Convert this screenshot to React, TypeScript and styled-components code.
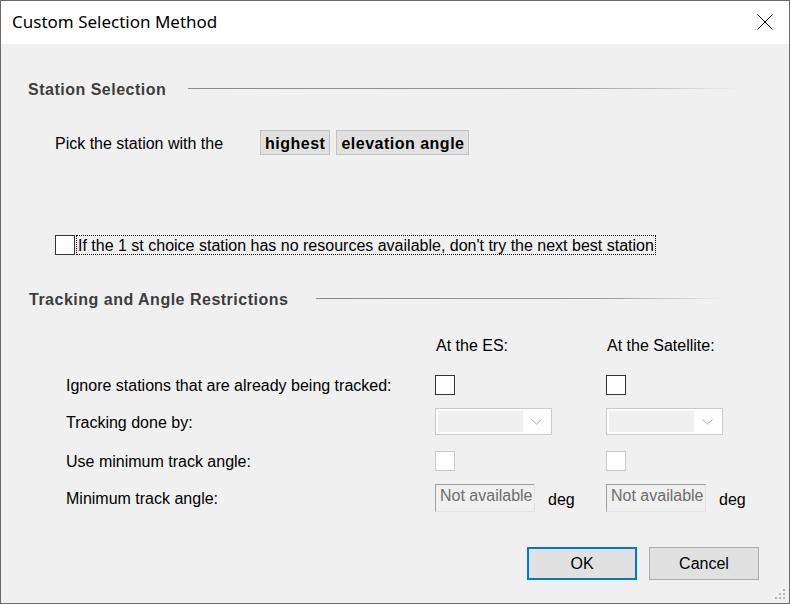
import React from "react";
import styled, { createGlobalStyle } from "styled-components";

const GlobalStyle = createGlobalStyle`
  html, body {
    margin: 0;
    padding: 0;
    background: #f0f0f0;
  }
  * {
    box-sizing: border-box;
  }
`;

const UI_FONT = `"Liberation Sans", Arial, sans-serif`;

const Window = styled.div`
  position: relative;
  width: 790px;
  height: 604px;
  border: 1px solid #6a6a6a;
  background: #f0f0f0;
  display: flex;
  flex-direction: column;
  font-family: ${UI_FONT};
  font-size: 16px;
  color: #000;
`;

const TitleBar = styled.div`
  height: 43px;
  flex-shrink: 0;
  background: #fff;
  display: flex;
  align-items: center;
  justify-content: space-between;
  padding: 0 16px 0 11px;
`;

const TitleText = styled.span`
  font-family: "Noto Sans", "Open Sans", sans-serif;
  font-size: 17px;
  color: #000;
  margin-top: -2px;
`;

const CloseButton = styled.button`
  width: 16px;
  height: 16px;
  padding: 0;
  border: none;
  background: transparent;
  display: flex;
  margin-top: -1px;
`;

const Body = styled.div`
  flex: 1;
  display: flex;
  flex-direction: column;
`;

const SectionHeader = styled.div<{ $top: number; $left: number; $right: number }>`
  display: flex;
  align-items: center;
  height: 20px;
  margin-top: ${(p) => p.$top}px;
  padding-left: ${(p) => p.$left}px;
  padding-right: ${(p) => p.$right}px;
`;

const SectionTitle = styled.span`
  font-weight: bold;
  letter-spacing: 0.5px;
  color: #3d3d3d;
  white-space: nowrap;
  padding-top: 4px;
`;

const SectionLine = styled.div<{ $gap: number }>`
  flex: 1;
  height: 1px;
  margin-left: ${(p) => p.$gap}px;
  background: linear-gradient(to right, #8a8a8a 0%, #9a9a9a 70%, #f0f0f0 100%);
`;

const PickRow = styled.div`
  display: flex;
  align-items: center;
  height: 25px;
  margin-top: 32px;
  padding-left: 54px;
`;

const PickLabel = styled.span`
  width: 205px;
  padding-top: 2px;
`;

const ChoiceButton = styled.button`
  height: 25px;
  padding: 2px 4px 0;
  margin-right: 6px;
  border: 1px solid #c2c2c2;
  background: #e1e1e1;
  font-family: ${UI_FONT};
  font-size: 16px;
  font-weight: bold;
  letter-spacing: 0.5px;
  color: #000;
`;

const CheckRow = styled.label`
  display: flex;
  align-items: center;
  height: 20px;
  margin-top: 80px;
  padding-left: 54px;
`;

const Box = styled.span<{ $disabled?: boolean }>`
  width: 20px;
  height: 20px;
  flex-shrink: 0;
  background: #fff;
  border: 1px solid ${(p) => (p.$disabled ? "#cccccc" : "#333333")};
`;

const FocusLabel = styled.span`
  margin-left: 1px;
  height: 20px;
  display: flex;
  align-items: center;
  padding: 2px 1px 0;
  border: 1px dotted #000;
  white-space: nowrap;
`;

const RestrictionGrid = styled.div`
  display: grid;
  grid-template-columns: 369px 171px 1fr;
  grid-template-rows: 40px 40px 33px 46px 28px;
  align-items: center;
  margin-top: 17px;
  padding-left: 65px;
`;

const ColumnHead = styled.span`
  padding: 2px 0 0 1px;
`;

const RowLabel = styled.span`
  white-space: nowrap;
  padding-top: 2px;
`;

const Combo = styled.div`
  width: 117px;
  height: 27px;
  background: #fff;
  border: 1px solid #cccccc;
  display: flex;
  align-items: center;
  padding: 2px;
`;

const ComboField = styled.div`
  width: 85px;
  height: 100%;
  background: #f0f0f0;
`;

const ComboArrow = styled.div`
  flex: 1;
  display: flex;
  justify-content: center;
  align-items: center;
`;

const FieldWrap = styled.div`
  display: flex;
  align-items: center;
`;

const NumField = styled.div`
  width: 100px;
  height: 28px;
  background: #f0f0f0;
  border-top: 1px solid #a0a0a0;
  border-left: 1px solid #a0a0a0;
  border-right: 1px solid #e3e3e3;
  border-bottom: 1px solid #e3e3e3;
  color: #6d6d6d;
  padding: 1px 0 0 4px;
  white-space: nowrap;
  line-height: 20px;
`;

const Unit = styled.span`
  margin-left: 13px;
  margin-top: 4px;
`;

const ButtonRow = styled.div`
  display: flex;
  justify-content: flex-end;
  gap: 12px;
  margin-top: 35px;
  padding-right: 30px;
`;

const DialogButton = styled.button<{ $default?: boolean }>`
  width: 110px;
  height: 33px;
  padding-top: 2px;
  background: #e1e1e1;
  border: ${(p) => (p.$default ? "2px solid #0078d7" : "1px solid #adadad")};
  font-family: ${UI_FONT};
  font-size: 16px;
  color: #000;
`;

const SizeGrip = styled.svg`
  position: absolute;
  right: 2px;
  bottom: 2px;
`;

const ChevronDown = () => (
  <svg width="11" height="6" viewBox="0 0 11 6">
    <path d="M0.5 0.5 L5.5 5 L10.5 0.5" fill="none" stroke="#a8a8a8" strokeWidth="1" />
  </svg>
);

export default function App() {
  return (
    <>
      <GlobalStyle />
      <Window>
        <TitleBar>
          <TitleText>Custom Selection Method</TitleText>
          <CloseButton aria-label="Close">
            <svg width="16" height="16" viewBox="0 0 16 16">
              <path d="M0.5 0.5 L15.5 15.5 M15.5 0.5 L0.5 15.5" stroke="#000" strokeWidth="1" />
            </svg>
          </CloseButton>
        </TitleBar>
        <Body>
          <SectionHeader $top={34} $left={27} $right={49}>
            <SectionTitle>Station Selection</SectionTitle>
            <SectionLine $gap={22} />
          </SectionHeader>

          <PickRow>
            <PickLabel>Pick the station with the</PickLabel>
            <ChoiceButton>highest</ChoiceButton>
            <ChoiceButton>elevation angle</ChoiceButton>
          </PickRow>

          <CheckRow>
            <Box />
            <FocusLabel>
              If the 1 st choice station has no resources available, don't try the next best station
            </FocusLabel>
          </CheckRow>

          <SectionHeader $top={33} $left={28} $right={64}>
            <SectionTitle>Tracking and Angle Restrictions</SectionTitle>
            <SectionLine $gap={28} />
          </SectionHeader>

          <RestrictionGrid>
            <span />
            <ColumnHead>At the ES:</ColumnHead>
            <ColumnHead>At the Satellite:</ColumnHead>

            <RowLabel>Ignore stations that are already being tracked:</RowLabel>
            <Box />
            <Box />

            <RowLabel>Tracking done by:</RowLabel>
            <Combo>
              <ComboField />
              <ComboArrow>
                <ChevronDown />
              </ComboArrow>
            </Combo>
            <Combo>
              <ComboField />
              <ComboArrow>
                <ChevronDown />
              </ComboArrow>
            </Combo>

            <RowLabel>Use minimum track angle:</RowLabel>
            <Box $disabled />
            <Box $disabled />

            <RowLabel>Minimum track angle:</RowLabel>
            <FieldWrap>
              <NumField>Not available</NumField>
              <Unit>deg</Unit>
            </FieldWrap>
            <FieldWrap>
              <NumField>Not available</NumField>
              <Unit>deg</Unit>
            </FieldWrap>
          </RestrictionGrid>

          <ButtonRow>
            <DialogButton $default>OK</DialogButton>
            <DialogButton>Cancel</DialogButton>
          </ButtonRow>
        </Body>
        <SizeGrip width="12" height="12" viewBox="0 0 12 12">
          <rect x="8" y="0" width="2" height="2" fill="#b8b8b8" />
          <rect x="4" y="4" width="2" height="2" fill="#b8b8b8" />
          <rect x="8" y="4" width="2" height="2" fill="#b8b8b8" />
          <rect x="0" y="8" width="2" height="2" fill="#b8b8b8" />
          <rect x="4" y="8" width="2" height="2" fill="#b8b8b8" />
          <rect x="8" y="8" width="2" height="2" fill="#b8b8b8" />
        </SizeGrip>
      </Window>
    </>
  );
}
